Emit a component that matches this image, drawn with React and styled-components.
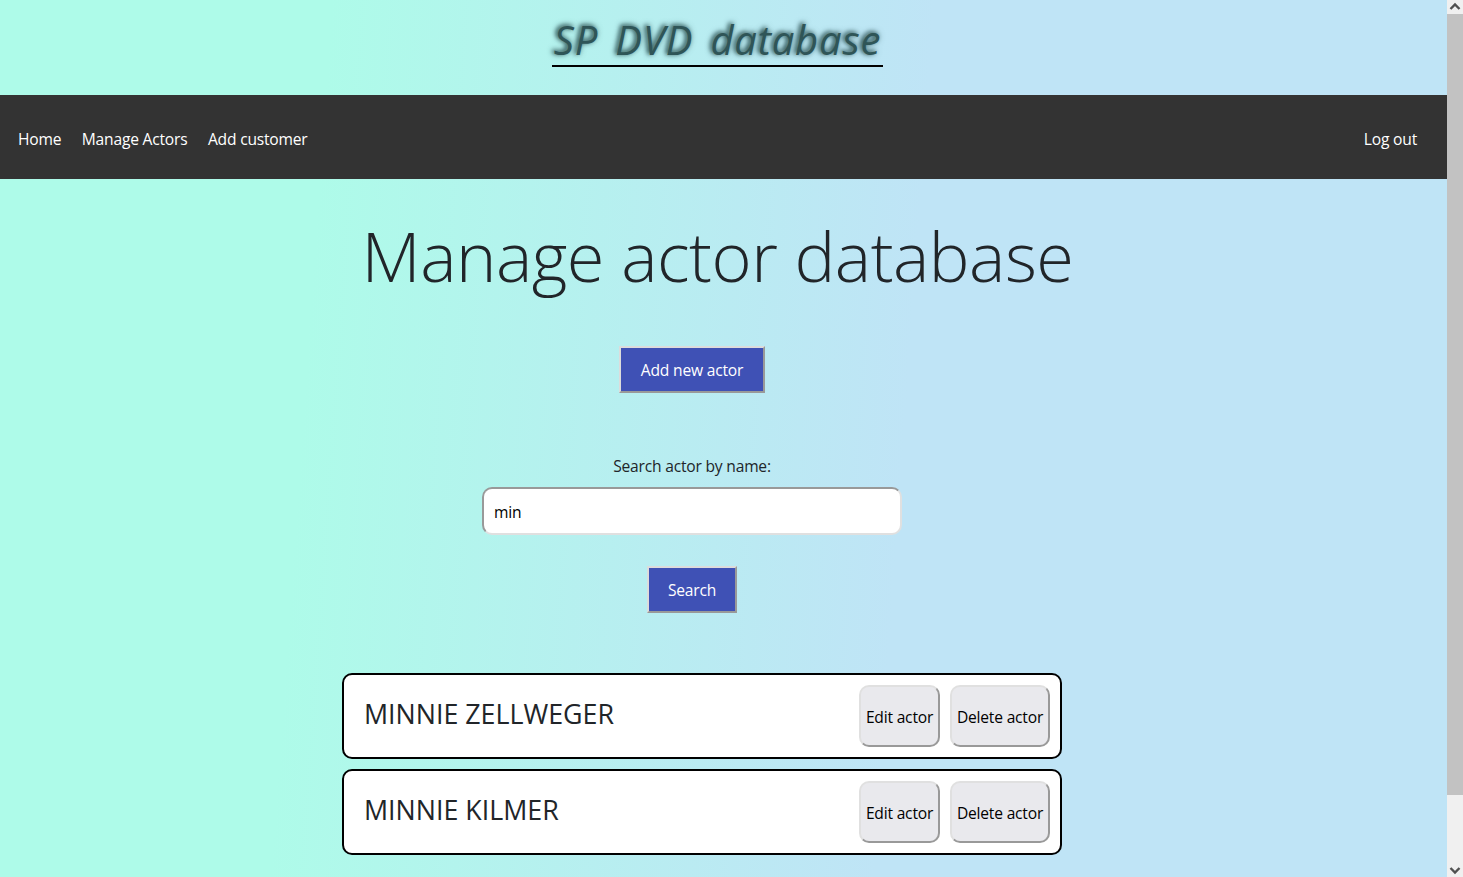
import React from "react";
import styled, { createGlobalStyle } from "styled-components";

const Global = createGlobalStyle`
  html, body { height: 100%; }
  body {
    margin: 0;
    overflow: hidden;
    font-family: "Open Sans", "Noto Sans", sans-serif;
    font-size: 15.6px;
    letter-spacing: -0.2px;
    color: #212529;
  }
`;

const Shell = styled.div`
  display: flex;
  height: 100vh;
  overflow: hidden;
`;

const Page = styled.div`
  flex: 1;
  min-width: 0;
  background: linear-gradient(94deg, #aefbe9 0%, #aefbe9 22%, #bfe4f6 62%, #bfe4f6 100%);
`;

const ScrollRail = styled.aside`
  width: 16px;
  flex: none;
  background: #f0f0f0;
  display: flex;
  flex-direction: column;
`;

const RailThumb = styled.div`
  height: 781px;
  background: #c2c2c2;
`;

const RailSpacer = styled.div`
  flex: 1;
`;

const RailArrow = styled.svg`
  display: block;
  width: 16px;
  height: 14px;
  flex: none;
`;

const Masthead = styled.header`
  height: 95px;
  display: flex;
  justify-content: center;
  padding-right: 12px;
`;

const Brand = styled.div`
  align-self: flex-start;
  margin-top: 12px;
  height: 53px;
  width: 331px;
  border-bottom: 2px solid #000;
  font-family: "Open Sans", sans-serif;
  font-style: italic;
  font-size: 40px;
  line-height: 56px;
  white-space: nowrap;
  text-align: center;
  color: #2f5557;
  letter-spacing: 0.8px;
  word-spacing: 6px;
  text-shadow: -2px -1px 4px #2f5557, -1px -1px 6px rgba(47, 85, 87, 0.7);
`;

const NavBar = styled.nav`
  height: 84px;
  background: #333;
  display: flex;
  align-items: center;
  justify-content: space-between;
  padding: 0 30px 0 18px;
`;

const NavGroup = styled.div`
  display: flex;
  gap: 20.5px;
  padding-top: 3px;
`;

const NavLink = styled.a`
  color: #fff;
  line-height: 22px;
  text-decoration: none;
`;

const Main = styled.main`
  display: flex;
  flex-direction: column;
`;

const Heading = styled.h1`
  margin: 32px 0 0;
  padding-right: 12px;
  text-align: center;
  font-weight: 300;
  font-size: 68.5px;
  line-height: 90px;
  letter-spacing: -0.5px;
  color: #212529;
`;

const FormColumn = styled.section`
  display: flex;
  flex-direction: column;
  align-items: center;
  padding-right: 63px;
`;

const PrimaryButton = styled.button`
  box-sizing: border-box;
  height: 47px;
  width: ${p => p.$w}px;
  padding: 1px 0 0;
  margin-top: ${p => p.$top}px;
  background: #3f51b5;
  color: #fff;
  font: inherit;
  letter-spacing: inherit;
  border-width: 2px;
  border-style: solid;
  border-color: #dcdcdc #999 #999 #dcdcdc;
`;

const SearchLabel = styled.label`
  margin-top: 62px;
  line-height: 22px;
  color: #212529;
`;

const SearchInput = styled.input`
  box-sizing: border-box;
  width: 420px;
  height: 48px;
  margin-top: 10px;
  padding: 2px 10px 0;
  background: #fff;
  color: #000;
  font: inherit;
  letter-spacing: inherit;
  border-width: 2px;
  border-style: solid;
  border-color: #999 #e0e0e0 #e0e0e0 #999;
  border-radius: 10px;
  outline: none;
`;

const ResultList = styled.section`
  display: flex;
  flex-direction: column;
  gap: 10px;
  margin-top: 60px;
  padding-right: 43px;
  align-items: center;
`;

const ActorCard = styled.article`
  box-sizing: border-box;
  width: 720px;
  height: 85.8px;
  background: #fff;
  border: 2px solid #000;
  border-radius: 10px;
  display: flex;
  align-items: center;
  padding: 0 10px 0 20px;
  gap: 10px;
`;

const ActorName = styled.h2`
  flex: 1;
  margin: 0 0 4.4px;
  font-weight: 400;
  font-size: 26.8px;
  letter-spacing: 0;
  line-height: 36px;
  color: #212529;
`;

const CardButton = styled.button`
  box-sizing: border-box;
  width: ${p => p.$w}px;
  height: 62px;
  padding: 2px 0 0;
  background: #e9e9ed;
  color: #000;
  font: inherit;
  letter-spacing: inherit;
  border-width: 2px;
  border-style: solid;
  border-color: #e0e0e0 #999 #999 #e0e0e0;
  border-radius: 10px;
`;

const actors = ["MINNIE ZELLWEGER", "MINNIE KILMER"];

export default function App() {
  return (
    <Shell>
      <Global />
      <Page>
        <Masthead>
          <Brand>SP DVD database</Brand>
        </Masthead>
        <NavBar>
          <NavGroup>
            <NavLink href="#">Home</NavLink>
            <NavLink href="#">Manage Actors</NavLink>
            <NavLink href="#">Add customer</NavLink>
          </NavGroup>
          <NavGroup>
            <NavLink href="#">Log out</NavLink>
          </NavGroup>
        </NavBar>
        <Main>
          <Heading>Manage actor database</Heading>
          <FormColumn>
            <PrimaryButton $top={45} $w={146}>Add new actor</PrimaryButton>
            <SearchLabel htmlFor="search">Search actor by name:</SearchLabel>
            <SearchInput id="search" defaultValue="min" />
            <PrimaryButton $top={31} $w={90}>Search</PrimaryButton>
          </FormColumn>
          <ResultList>
            {actors.map(name => (
              <ActorCard key={name}>
                <ActorName>{name}</ActorName>
                <CardButton $w={81}>Edit actor</CardButton>
                <CardButton $w={100}>Delete actor</CardButton>
              </ActorCard>
            ))}
          </ResultList>
        </Main>
      </Page>
      <ScrollRail>
        <RailArrow viewBox="0 0 16 14">
          <path d="M3.5 9 L8 4.5 L12.5 9" fill="none" stroke="#505050" strokeWidth="2.4" />
        </RailArrow>
        <RailThumb />
        <RailSpacer />
        <RailArrow viewBox="0 0 16 14">
          <path d="M3.5 5 L8 9.5 L12.5 5" fill="none" stroke="#505050" strokeWidth="2.4" />
        </RailArrow>
      </ScrollRail>
    </Shell>
  );
}
